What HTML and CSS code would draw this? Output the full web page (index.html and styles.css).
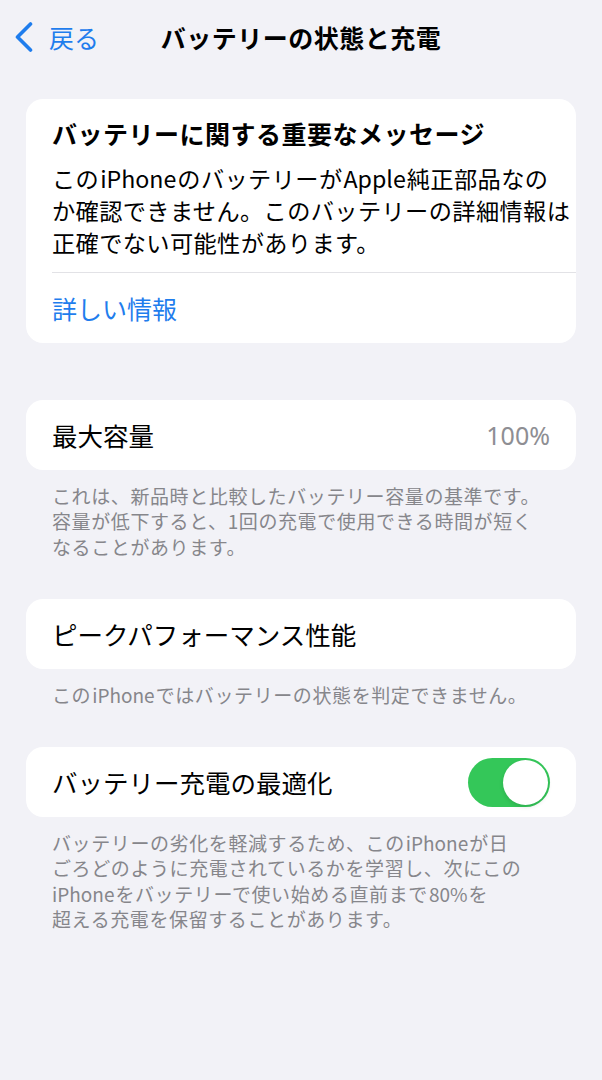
FILE: index.html
```html
<!DOCTYPE html>
<html lang="ja">
<head>
<meta charset="utf-8">
<title>バッテリーの状態と充電</title>
<link rel="stylesheet" href="styles.css">
</head>
<body>
<header class="nav">
  <a class="back">
    <svg class="chevron" viewBox="0 0 20 30" width="20" height="30"><path d="M16.5 2 L3.5 15 L16.5 28" fill="none" stroke="currentColor" stroke-width="3.6" stroke-linecap="round" stroke-linejoin="round"/></svg>
    <span class="back-label">戻る</span>
  </a>
  <h1 class="title">バッテリーの状態と充電</h1>
  <span class="spacer"></span>
</header>

<main class="content">
  <section class="card card-message">
    <div class="message-body">
      <h2 class="message-title">バッテリーに関する重要なメッセージ</h2>
      <p class="message-text">この<span class="lat">iPhone</span>のバッテリーが<span class="lat">Apple</span>純正部品なの<br>か確認できません。このバッテリーの詳細情報は<br>正確でない可能性があります。</p>
    </div>
    <div class="divider"></div>
    <a class="link-row">詳しい情報</a>
  </section>

  <section class="card row">
    <span class="label">最大容量</span>
    <span class="value">100%</span>
  </section>
  <p class="footer">これは、新品時と比較したバッテリー容量の基準です。<br>容量が低下すると、1回の充電で使用できる時間が短く<br>なることがあります。</p>

  <section class="card row">
    <span class="label">ピークパフォーマンス性能</span>
  </section>
  <p class="footer">この<span class="lat">iPhone</span>ではバッテリーの状態を判定できません。</p>

  <section class="card row">
    <span class="label">バッテリー充電の最適化</span>
    <span class="toggle on"><span class="knob"></span></span>
  </section>
  <p class="footer">バッテリーの劣化を軽減するため、この<span class="lat">iPhone</span>が日<br>ごろどのように充電されているかを学習し、次にこの<br><span class="lat lat-start">iPhone</span>をバッテリーで使い始める直前まで<span class="lat">80%</span>を<br>超える充電を保留することがあります。</p>
</main>
</body>
</html>
```

FILE: styles.css
```css
* { box-sizing: border-box; }

html, body {
  margin: 0;
  padding: 0;
}

body {
  background: #f2f2f7;
  font-family: "Noto Sans CJK JP", "Noto Sans", sans-serif;
  color: #000;
  width: 602px;
  min-height: 1080px;
}

.nav {
  height: 74px;
  display: grid;
  grid-template-columns: 1fr auto 1fr;
  align-items: center;
  padding: 0 14px;
}

.back {
  display: flex;
  align-items: center;
  color: #1f7ded;
  gap: 15px;
}

.chevron {
  display: block;
  width: 20px;
  height: 30px;
}

.back-label {
  font-size: 25px;
  line-height: 34px;
}

.title {
  margin: 0;
  font-size: 25px;
  font-weight: 700;
  line-height: 34px;
  letter-spacing: 0.5px;
  white-space: nowrap;
}

.content {
  padding: 25px 26px 0;
}

.card {
  background: #fff;
  border-radius: 17px;
}

.card-message {
  margin-bottom: 57px;
}

.message-body {
  padding: 17px 20px 14px 26px;
}

.message-title {
  margin: 0;
  font-size: 25px;
  font-weight: 700;
  line-height: 34px;
  letter-spacing: 0.5px;
  white-space: nowrap;
}

.message-text {
  margin: 12px 0 0;
  font-size: 23.2px;
  letter-spacing: 0.4px;
  line-height: 32px;
  white-space: nowrap;
}

.lat {
  margin: 0 1px;
  letter-spacing: 0;
}

.lat-start {
  margin-left: 0;
}

.divider {
  height: 1px;
  background: #e2e2e6;
  margin-left: 26px;
}

.link-row {
  display: flex;
  align-items: center;
  height: 70px;
  padding-left: 26px;
  color: #1f7ded;
  font-size: 25px;
}

.row {
  height: 70px;
  display: flex;
  align-items: center;
  justify-content: space-between;
  padding: 0 26px;
}

.label {
  font-size: 25.5px;
  line-height: 34px;
  white-space: nowrap;
}

.value {
  font-family: "Noto Sans", "Noto Sans CJK JP", sans-serif;
  font-size: 25px;
  color: #8e8e93;
}

.footer {
  margin: 12.5px 0 40px;
  padding-left: 26px;
  font-size: 19px;
  letter-spacing: 0.6px;
  line-height: 25.5px;
  color: #86868b;
  white-space: nowrap;
}

.toggle {
  position: relative;
  width: 82px;
  height: 49px;
  border-radius: 25px;
  background: #e5e5ea;
  flex: none;
}

.toggle.on {
  background: #34c759;
}

.knob {
  position: absolute;
  top: 2px;
  right: 2px;
  width: 45px;
  height: 45px;
  border-radius: 50%;
  background: #fff;
  box-shadow: 0 2px 4px rgba(0, 0, 0, 0.12);
}
```
